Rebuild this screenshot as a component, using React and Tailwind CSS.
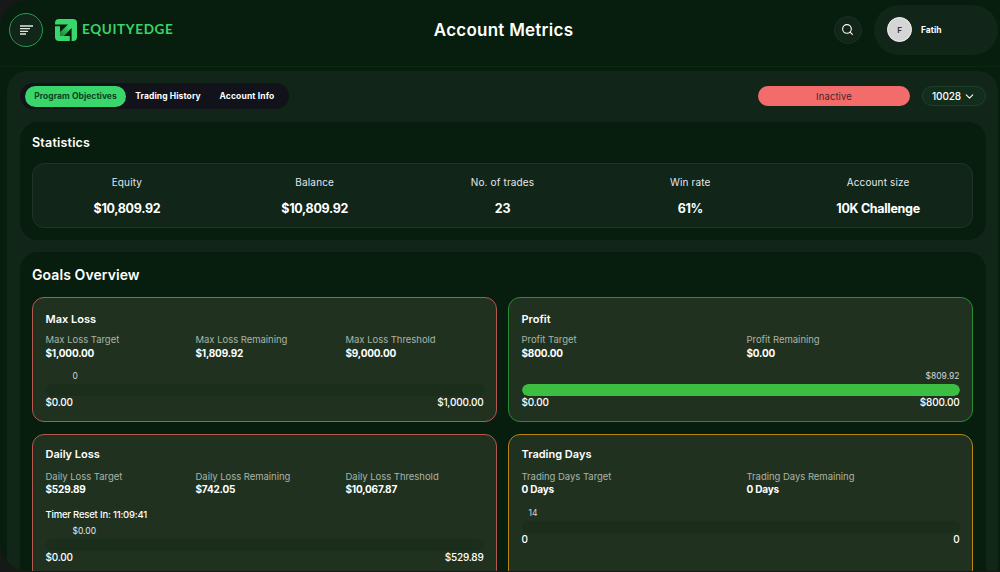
import React, { useState } from "react";
import { FiChevronDown, FiSearch } from "react-icons/fi";

const tabs = [
  { key: "objectives", label: "Program Objectives", style: "w-[101px] tracking-[0.04px]" },
  { key: "history", label: "Trading History", style: "w-[84px] tracking-[0.1px]" },
  { key: "info", label: "Account Info", style: "w-[74px] tracking-[0.15px]" },
];

const statistics = [
  { label: "Equity", value: "$10,809.92" },
  { label: "Balance", value: "$10,809.92" },
  { label: "No. of trades", value: "23" },
  { label: "Win rate", value: "61%" },
  { label: "Account size", value: "10K Challenge" },
];

const goals = [
  {
    title: "Max Loss",
    border: "border-[#b4574f]",
    size: "h-[125px] pt-[13px]",
    columns: "mt-[6px] grid-cols-[150px_150px_1fr]",
    valueStyle: "leading-[14px]",
    items: [
      { label: "Max Loss Target", value: "$1,000.00" },
      { label: "Max Loss Remaining", value: "$1,809.92" },
      { label: "Max Loss Threshold", value: "$9,000.00" },
    ],
    current: "0",
    currentStyle: "mt-[10px] pl-[27px] text-gray-300",
    progress: 0,
    min: "$0.00",
    max: "$1,000.00",
  },
  {
    title: "Profit",
    border: "border-[#2b8b35]",
    size: "h-[125px] pt-[13px]",
    columns: "mt-[6px] grid-cols-[225px_1fr]",
    valueStyle: "leading-[14px]",
    items: [
      { label: "Profit Target", value: "$800.00" },
      { label: "Profit Remaining", value: "$0.00" },
    ],
    current: "$809.92",
    currentStyle: "mt-[10px] text-right text-gray-300",
    progress: 100,
    min: "$0.00",
    max: "$800.00",
  },
  {
    title: "Daily Loss",
    border: "border-[#b4574f]",
    size: "h-[148px] pt-[11px]",
    columns: "mt-2 grid-cols-[150px_150px_1fr]",
    valueStyle: "leading-[13px]",
    items: [
      { label: "Daily Loss Target", value: "$529.89" },
      { label: "Daily Loss Remaining", value: "$742.05" },
      { label: "Daily Loss Threshold", value: "$10,067.87" },
    ],
    timer: "11:09:41",
    current: "$0.00",
    currentStyle: "mt-[3px] pl-[27px] text-gray-200",
    progress: 0,
    min: "$0.00",
    max: "$529.89",
  },
  {
    title: "Trading Days",
    border: "border-[#b98510]",
    size: "h-[148px] pt-[11px]",
    columns: "mt-2 grid-cols-[225px_1fr]",
    valueStyle: "leading-[13px]",
    items: [
      { label: "Trading Days Target", value: "0 Days" },
      { label: "Trading Days Remaining", value: "0 Days" },
    ],
    current: "14",
    currentStyle: "mt-[11px] pl-[7px] text-gray-300",
    progress: 0,
    min: "0",
    max: "0",
  },
];

export default function App() {
  const [activeTab, setActiveTab] = useState("objectives");

  return (
    <div className="h-[572px] w-[1000px] overflow-hidden bg-[#171918] font-['Inter',sans-serif] text-white">
      <div className="h-[571px] overflow-hidden rounded-l-[28px] bg-[#071d0d]">
        <Header />
        <main className="ml-[7px] mr-[2px] mt-1 h-[520px] rounded-t-[20px] bg-[#112518] px-[13px] pt-3">
          <div className="flex h-[26px] w-[966px] items-center justify-between">
            <div className="flex h-[26px] w-[269px] items-center rounded-full bg-[#12131a] pl-[5px]">
              {tabs.map((tab) => (
                <button
                  key={tab.key}
                  onClick={() => setActiveTab(tab.key)}
                  className={`h-[21px] whitespace-nowrap rounded-full text-center text-[8.5px] font-bold ${tab.style} ${
                    activeTab === tab.key ? "bg-[#38d66b] text-[#0b4520]" : ""
                  }`}
                >
                  {tab.label}
                </button>
              ))}
            </div>
            <div className="flex items-center gap-3">
              <div className="h-5 w-[152px] rounded-full bg-[#f36c6c] text-center text-[9.5px] leading-[21px] tracking-[0.1px] text-[#4a2427]">
                Inactive
              </div>
              <button className="flex h-5 w-16 items-center justify-center gap-[2px] rounded-full border border-[#1d3f28] bg-[#122d1b] text-[10px] font-medium tracking-[-0.15px]">
                10028
                <FiChevronDown size={13} />
              </button>
            </div>
          </div>

          <section className="mt-[13px] h-[118px] w-[966px] rounded-[18px] bg-[#071d0d] px-3 pt-[13px]">
            <h2 className="text-[12.5px] font-semibold leading-4 tracking-[0.2px]">Statistics</h2>
            <div className="mt-3 grid h-[65px] w-[941px] grid-cols-5 rounded-xl border border-[#20352a] bg-[#112518] pt-[11px] text-center">
              {statistics.map((item) => (
                <div key={item.label}>
                  <p className="text-[10px] leading-[14px] tracking-[0.15px] text-gray-200">
                    {item.label}
                  </p>
                  <p className="mt-3 text-[12.5px] font-bold leading-4 tracking-[-0.3px]">
                    {item.value}
                  </p>
                </div>
              ))}
            </div>
          </section>

          <section className="mt-3 h-[400px] w-[966px] rounded-t-[18px] bg-[#071d0d] px-3 pt-3">
            <h2 className="text-sm font-semibold leading-[22px] tracking-[0.08px]">
              Goals Overview
            </h2>
            <div className="mt-[11px] grid w-[941px] grid-cols-2 gap-x-[11px] gap-y-3">
              {goals.map((goal) => (
                <GoalCard key={goal.title} goal={goal} />
              ))}
            </div>
          </section>
        </main>
      </div>
    </div>
  );
}

const Header = () => {
  return (
    <header className="grid h-[67px] grid-cols-[1fr_auto_1fr] items-center border-b border-[#0b2610] pb-[7px] pl-[9px] pr-[2px]">
      <div className="flex items-center">
        <button className="flex h-[34px] w-[34px] items-center justify-center rounded-full border border-[#2a9b50] bg-[#112518]">
          <svg width="13" height="10" viewBox="0 0 13 10" stroke="#dfe5e0" strokeWidth="1.3">
            <path d="M0 1h13M0 3.7h10M0 6.4h8M0 9h6" />
          </svg>
        </button>
        <Logo />
        <span className="ml-[5px] font-['Lato',sans-serif] text-[13.5px] font-bold tracking-[0.65px] text-[#38d66b]">
          EQUITYEDGE
        </span>
      </div>
      <h1 className="pt-[2px] text-[17px] font-semibold tracking-[0.25px]">Account Metrics</h1>
      <div className="flex items-center justify-end gap-3">
        <button className="flex h-7 w-7 items-center justify-center rounded-full border border-[#17331f] bg-[#112518] pr-px">
          <FiSearch size={13} />
        </button>
        <div className="flex h-[50px] w-[124px] items-center gap-[9px] rounded-full bg-[#112518] pl-[13px]">
          <div className="flex h-[25px] w-[25px] items-center justify-center rounded-full border border-gray-100 bg-[#d5d5d5] text-[8px] font-semibold text-[#333]">
            F
          </div>
          <span className="pt-px text-[8.5px] font-bold">Fatih</span>
        </div>
      </div>
    </header>
  );
};

const Logo = () => {
  return (
    <svg className="ml-3" width="22" height="22" viewBox="0 0 22 22">
      <defs>
        <linearGradient id="tail" x1="1" y1="0" x2="0" y2="1">
          <stop offset="0.2" stopColor="#38d66b" />
          <stop offset="1" stopColor="#1a7a39" />
        </linearGradient>
      </defs>
      <rect width="22" height="22" rx="4" fill="#38d66b" />
      <path fill="url(#tail)" d="M12.5 6 16 9.500 8.500 17H5V13.500Z" />
      <path fill="#071d0d" d="M0 5.400H13L5 13.200V7.200H0Z" />
      <path fill="#071d0d" d="M16.600 22V9L8.800 17H14.800V22Z" />
    </svg>
  );
};

const GoalCard = ({ goal }) => {
  return (
    <div className={`rounded-xl border bg-[#20321f] px-[12.5px] ${goal.size} ${goal.border}`}>
      <h3 className="text-[11px] font-semibold leading-4">{goal.title}</h3>
      <div className={`grid ${goal.columns}`}>
        {goal.items.map((item) => (
          <div key={item.label}>
            <p className="text-[9.5px] leading-[13px] tracking-[-0.03px] text-[#aab2a9]">
              {item.label}
            </p>
            <p className={`text-[10px] font-bold tracking-[-0.2px] ${goal.valueStyle}`}>
              {item.value}
            </p>
          </div>
        ))}
      </div>
      {goal.timer && (
        <p className="mt-3 h-[14px] text-[9.5px] font-medium leading-[14px] tracking-[-0.2px]">
          Timer Reset In: {goal.timer}
        </p>
      )}
      <p className={`h-3 text-[8.5px] leading-3 ${goal.currentStyle}`}>{goal.current}</p>
      <div className="mt-[2px] h-3 overflow-hidden rounded-full bg-[#1b2d1b]">
        <div className="h-full rounded-full bg-[#3cbe43]" style={{ width: `${goal.progress}%` }} />
      </div>
      <div className="flex justify-between text-[10px] font-medium leading-[13px] tracking-[-0.2px]">
        <span>{goal.min}</span>
        <span>{goal.max}</span>
      </div>
    </div>
  );
};
